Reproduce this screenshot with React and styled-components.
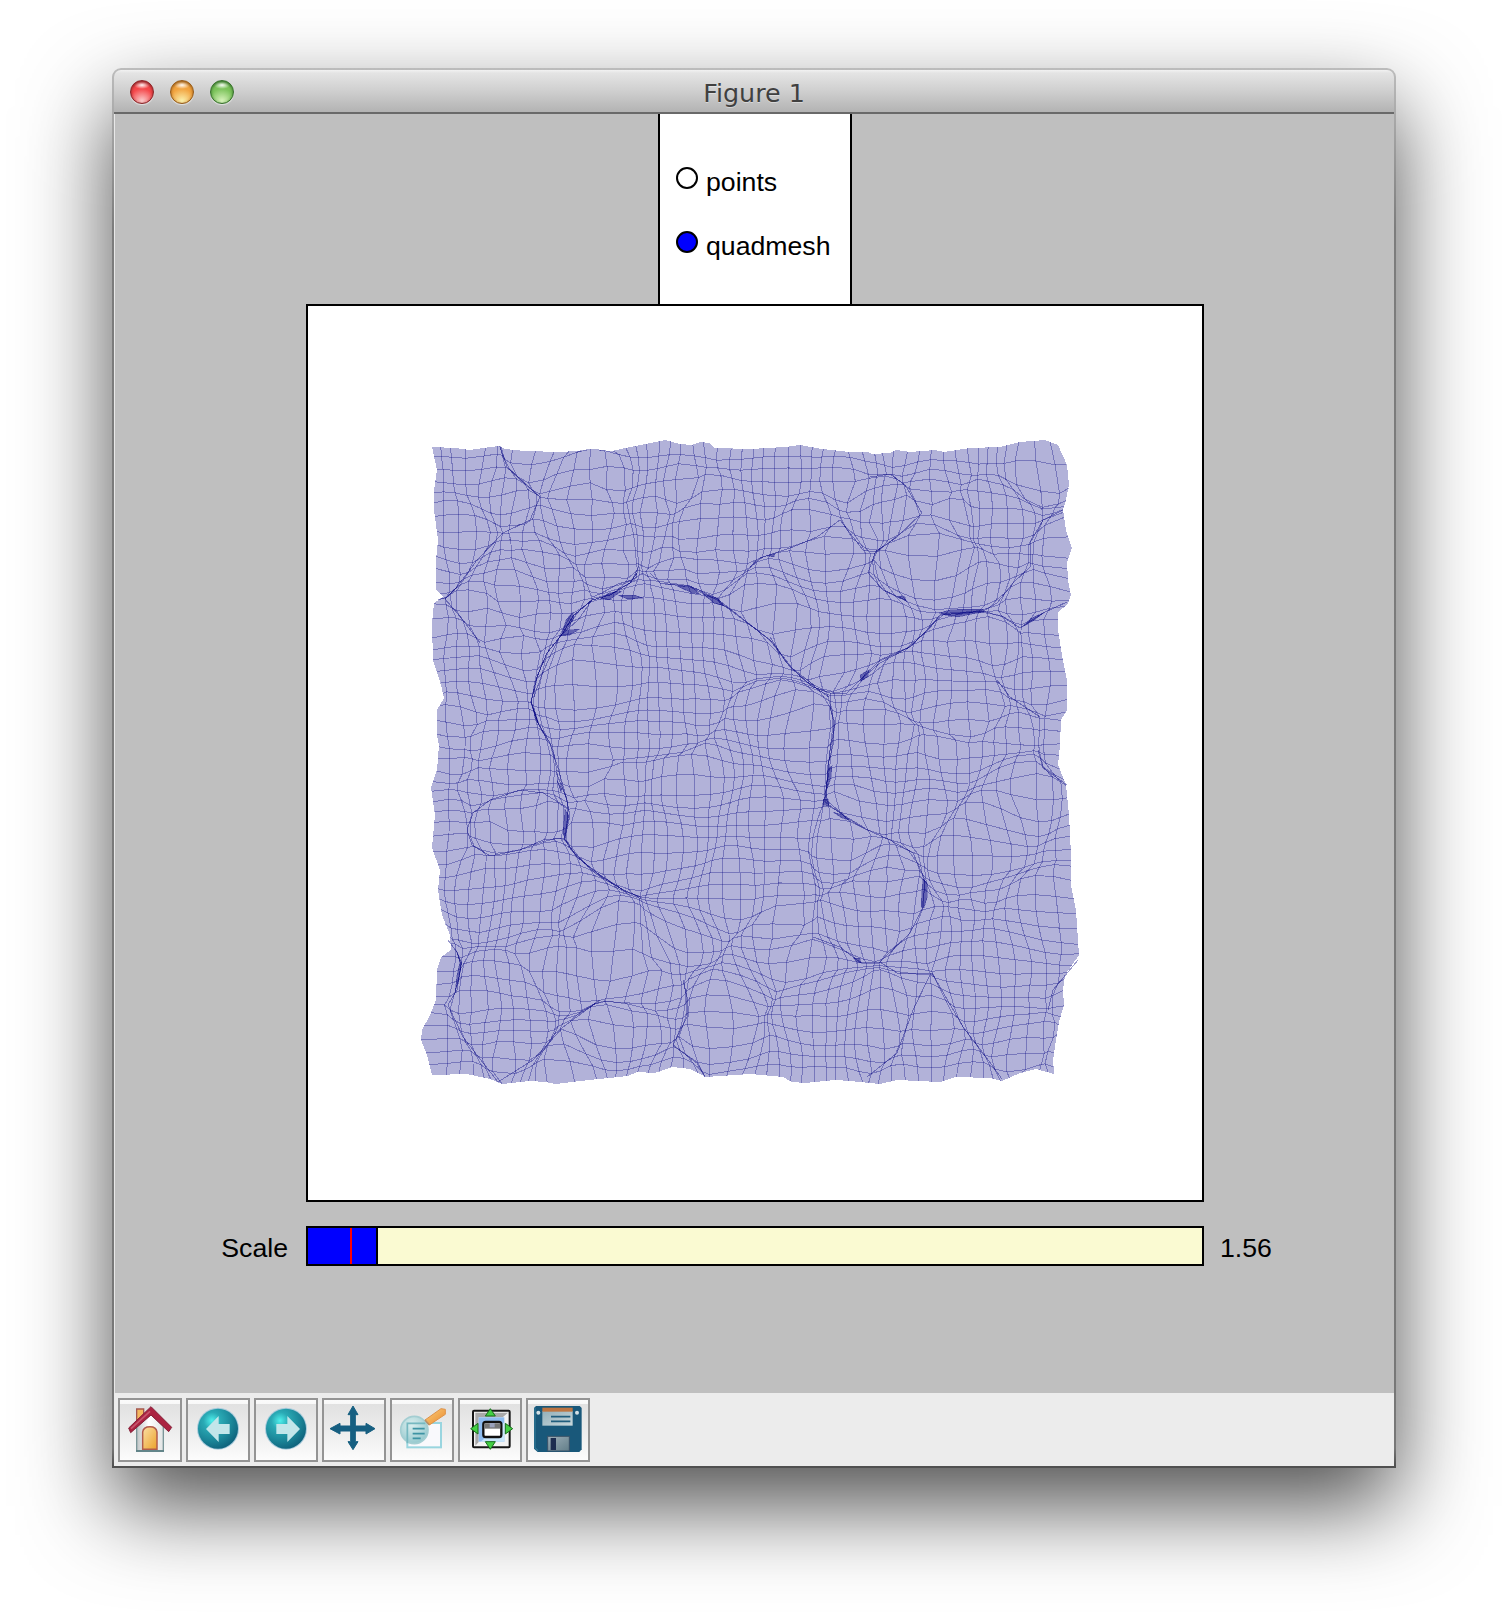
import React from "react";
import styled, { createGlobalStyle } from "styled-components";

const Global = createGlobalStyle`
  * { box-sizing: border-box; }
  body { margin: 0; background: #fff; overflow: hidden; }
`;

const Desktop = styled.main`
  height: 1624px;
  padding: 68px 112px 0;
  background: #fff;
`;

const Window = styled.section`
  width: 1284px;
  height: 1400px;
  padding: 2px 2px 2px;
  border-radius: 9px 9px 0 0;
  background: linear-gradient(#bcbcbc 0, #a8a8a8 50px, #7c7c7c 160px, #777 1380px, #505050 1398px);
  box-shadow: 0 38px 88px rgba(0, 0, 0, 0.69);
`;

const TitleBar = styled.header`
  display: grid;
  grid-template-columns: 1fr auto 1fr;
  align-items: center;
  height: 44px;
  padding: 1px 16px 0;
  border-bottom: 2px solid #696969;
  border-radius: 7px 7px 0 0;
  background: linear-gradient(#f2f2f2 0, #e4e4e4 3px, #cfcfcf 50%, #b3b3b3 100%);
`;

const Lights = styled.div`
  display: flex;
  gap: 16px;
`;

const Light = styled.i`
  width: 24px;
  height: 24px;
  border: 1px solid ${(p) => p.$rim};
  border-radius: 50%;
  background:
    radial-gradient(ellipse 8px 4px at 50% 4px, rgba(255, 255, 255, 0.95), rgba(255, 255, 255, 0) 100%),
    radial-gradient(circle at 50% 92%, ${(p) => p.$glow} 0, ${(p) => p.$color} 55%, ${(p) => p.$color} 70%, ${(p) => p.$rim} 115%);
  box-shadow: inset 0 1px 3px ${(p) => p.$rim}, 0 1px 1px rgba(255, 255, 255, 0.6);
`;

const Title = styled.h1`
  margin: 0;
  padding-top: 2px;
  color: #404040;
  font: 400 25.4px/38px "DejaVu Sans", sans-serif;
  text-shadow: 0 1px 0 rgba(255, 255, 255, 0.4);
`;

const Canvas = styled.div`
  display: grid;
  grid-template-columns: 191px 898px 1fr;
  grid-template-rows: 190px 898px 24px 40px;
  height: 1279px;
  border-left: 1px solid #e8e8e8;
  background: #bfbfbf;
  color: #000;
  font: 26.67px/32px "Liberation Sans", Arial, sans-serif;
`;

const RadioPanel = styled.div`
  grid-column: 2;
  justify-self: center;
  display: flex;
  flex-direction: column;
  gap: 32px;
  width: 194px;
  padding: 49px 0 0 16px;
  border: solid #000;
  border-width: 0 2px;
  background: #fff;
`;

const Option = styled.label`
  display: flex;
  gap: 8px;
  height: 32px;
  line-height: 38px;
`;

const Dot = styled.i`
  flex: none;
  width: 22px;
  height: 22px;
  margin-top: 4px;
  border: 2px solid #000;
  border-radius: 50%;
  background: ${(p) => (p.$on ? "#00f" : "#fff")};
`;

const Axes = styled.div`
  grid-column: 2;
  grid-row: 2;
  border: 2px solid #000;
  background: #fff;
  svg { display: block; }
`;

const SliderLabel = styled.span`
  grid-column: 1;
  grid-row: 4;
  justify-self: end;
  padding: 6px 18px 0 0;
`;

const SliderValue = styled.span`
  grid-column: 3;
  grid-row: 4;
  padding: 6px 0 0 16px;
`;

const Track = styled.div`
  grid-column: 2;
  grid-row: 4;
  border: 2px solid #000;
  background: #fafad2;
`;

const Fill = styled.div`
  width: 70px;
  height: 100%;
  padding-left: 42px;
  border-right: 2px solid #000;
  background: #00f;
`;

const Initial = styled.div`
  width: 2px;
  height: 100%;
  background: #f00;
`;

const Toolbar = styled.nav`
  display: flex;
  gap: 4px;
  height: 73px;
  padding: 5px 4px;
  background: #ececec;
`;

const ToolButton = styled.button`
  width: 64px;
  height: 64px;
  padding: 0;
  border: 2px solid #949494;
  background: linear-gradient(#fbfbfb 0, #f8f8f8 4px, #e1e1e1 4px, #efefef 60%, #fcfcfc 100%);
  svg { display: block; }
`;

/* ---- mesh ---- */

const N = 53;
const BOX = { x0: 432, y0: 447, x1: 1062, y1: 1076 };

const EDGES = {
  top: [[432,447],[455,448],[470,450],[490,447],[500,446],[505,449],[525,451],[560,452],[590,450],[612,451],[635,446],[650,443],[665,440],[680,444],[692,445],[700,442],[709,443],[715,448],[750,449],[785,447],[800,445],[822,449],[850,452],[868,452],[872,454],[890,453],[896,450],[910,452],[935,450],[944,452],[970,448],[1000,447],[1020,442],[1045,440],[1058,445]],
  right: [[1058,445],[1067,465],[1069,485],[1066,500],[1063,510],[1066,530],[1072,548],[1067,562],[1068,580],[1071,595],[1068,604],[1058,612],[1058,630],[1062,655],[1067,680],[1067,710],[1061,720],[1060,745],[1058,765],[1066,785],[1069,815],[1071,855],[1071,885],[1076,910],[1079,955],[1065,975],[1063,990],[1064,1005],[1059,1022],[1056,1040],[1053,1060],[1054,1074]],
  bottom: [[432,1075],[467,1074],[490,1079],[502,1084],[530,1081],[545,1082],[556,1084],[580,1081],[628,1076],[637,1072],[655,1073],[672,1067],[690,1069],[706,1077],[750,1074],[783,1077],[792,1082],[805,1083],[835,1080],[850,1081],[880,1084],[897,1080],[940,1082],[955,1077],[990,1078],[1002,1081],[1020,1073],[1036,1069],[1054,1074]],
  left: [[432,447],[437,470],[434,490],[434,510],[438,540],[436,560],[436,590],[443,597],[434,603],[432,625],[433,660],[441,685],[444,698],[437,710],[437,735],[439,745],[437,770],[431,787],[435,815],[432,848],[440,870],[438,890],[442,915],[450,935],[451,950],[441,957],[437,970],[436,1000],[430,1015],[422,1030],[421,1040],[427,1055],[432,1075]],
};

/* [strength, reach, points] for every filament that gathers the mesh lines */
const FILAMENTS = [
  [0.96, 34, [[637,573],[630,583],[610,595],[592,600],[573,616],[563,633],[547,653],[537,677],[531,702],[538,723],[550,743],[558,768],[567,800],[568,820],[564,838],[577,857],[597,873],[623,890],[640,897]]],
  [0.95, 30, [[650,573],[660,583],[690,587],[717,600],[737,615],[770,640],[790,667],[813,687],[830,693],[847,693],[863,677],[880,660],[910,647],[930,627],[940,615],[963,613],[983,611],[997,603],[1013,583],[1030,567],[1030,543],[1043,520],[1063,510]]],
  [0.9, 18, [[983,611],[1003,617],[1020,628],[1043,613],[1067,602]]],
  [0.8, 16, [[1021,630],[1023,663],[1025,693],[1040,717]]],
  [0.95, 27, [[830,693],[830,707],[835,723],[830,750],[825,802],[847,818],[863,828],[890,840],[913,853],[925,880],[923,907],[910,933],[880,962]]],
  [0.92, 20, [[880,962],[860,962],[840,947],[813,937]]],
  [0.9, 21, [[880,962],[897,973],[932,973],[963,1027],[983,1053],[1002,1079]]],
  [0.94, 21, [[500,447],[507,467],[540,497],[530,520],[503,533],[477,560],[457,587],[445,599],[463,620],[480,643]]],
  [0.88, 18, [[543,638],[507,620],[493,600],[493,583],[500,570],[533,540],[553,545],[573,560],[592,597]]],
  [0.88, 17, [[590,480],[603,497],[633,530],[632,557],[637,573]]],
  [0.88, 18, [[627,500],[640,520],[677,535],[683,553],[693,567]]],
  [0.85, 15, [[702,475],[699,493],[677,510]]],
  [0.93, 21, [[750,567],[760,558],[793,547],[817,537],[840,520],[863,550],[875,552],[897,537],[922,513],[905,485],[890,474],[870,477]]],
  [0.8, 17, [[922,513],[950,497],[977,477]]],
  [0.88, 18, [[935,528],[950,535],[1000,553]]],
  [0.9, 18, [[875,553],[868,573],[883,590],[905,600]]],
  [0.92, 20, [[997,680],[1010,697],[1040,717]]],
  [0.88, 20, [[875,690],[897,713],[923,727],[950,737],[968,741],[983,735],[1010,713]]],
  [0.88, 20, [[617,760],[687,753],[710,737],[723,717],[733,693],[750,683],[773,682],[813,687]]],
  [0.9, 20, [[568,808],[543,793],[520,790],[490,800],[473,813],[467,830],[472,845],[490,856],[520,850],[543,840],[564,838]]],
  [0.94, 22, [[448,940],[457,952],[461,965],[457,990],[448,1005],[463,1037],[498,1082],[533,1060],[547,1045],[563,1027],[600,1000]]],
  [0.85, 18, [[480,945],[510,950],[530,975],[543,997],[560,1022]]],
  [0.9, 18, [[683,980],[687,997],[687,1017],[673,1045],[697,1063],[705,1077]]],
  [0.88, 18, [[560,935],[570,940],[593,953],[633,952],[663,970],[677,960]]],
  [0.88, 20, [[763,1018],[783,990],[820,975],[867,973]]],
  [0.9, 19, [[930,975],[913,1010],[897,1053],[867,1077]]],
  [0.92, 18, [[1078,960],[1053,990],[1048,1010]]],
  [0.85, 15, [[1060,1030],[1043,1067],[1020,1075]]],
  [0.92, 15, [[1038,750],[1043,768],[1067,785]]],
  [0.88, 20, [[715,965],[733,937],[750,925],[770,907],[817,897],[850,880]]],
  [0.85, 18, [[817,897],[812,870],[808,847],[825,805]]],
  [0.8, 18, [[1000,790],[975,790],[960,805],[937,835],[925,878]]],
  [0.8, 18, [[955,905],[980,885],[1012,875],[1055,862]]],
  [0.8, 18, [[480,722],[468,735],[467,750],[475,765],[455,785]]],
  [0.85, 17, [[568,806],[590,800],[603,785],[617,762]]],
];

const interp = (pts, axis, v) => {
  const o = 1 - axis;
  for (let k = 0; k < pts.length - 1; k++) {
    const a = pts[k], b = pts[k + 1];
    if (v <= b[axis] || k === pts.length - 2) {
      const t = Math.max(0, Math.min(1, (v - a[axis]) / (b[axis] - a[axis] || 1)));
      return a[o] + (b[o] - a[o]) * t;
    }
  }
  return pts[0][o];
};

const nearest = (pts, x, y) => {
  let best = [0, 0, 1e9];
  for (let k = 0; k < pts.length - 1; k++) {
    const [ax, ay] = pts[k];
    const ex = pts[k + 1][0] - ax, ey = pts[k + 1][1] - ay;
    const t = Math.max(0, Math.min(1, ((x - ax) * ex + (y - ay) * ey) / (ex * ex + ey * ey)));
    const vx = ax + ex * t - x, vy = ay + ey * t - y;
    const d = vx * vx + vy * vy;
    if (d < best[2]) best = [vx, vy, d];
  }
  return best;
};

const random = (seed) => () => {
  seed = (seed * 1664525 + 1013904223) >>> 0;
  return seed / 4294967296;
};

function buildMesh() {
  const rnd = random(29);
  const blobs = Array.from({ length: 380 }, () => ({
    x: 420 + rnd() * 660,
    y: 435 + rnd() * 655,
    s: 9 + rnd() * 17,
    a: rnd() * 0.95 - 0.32,
  }));
  const grid = [];
  for (let j = 0; j <= N; j++) {
    const row = [];
    for (let i = 0; i <= N; i++) {
      const bx = BOX.x0 + ((BOX.x1 - BOX.x0) * i) / N;
      const by = BOX.y0 + ((BOX.y1 - BOX.y0) * j) / N;
      let x = bx, y = by;
      for (const b of blobs) {
        const dx = bx - b.x, dy = by - b.y;
        const g = b.a * Math.exp(-(dx * dx + dy * dy) / (2 * b.s * b.s));
        x += dx * g;
        y += dy * g;
      }
      let sx = 0, sy = 0, total = 0;
      for (const [strength, reach, pts] of FILAMENTS) {
        const [vx, vy, d] = nearest(pts, x, y);
        const g = Math.exp(-d / (reach * reach));
        sx += vx * g * strength;
        sy += vy * g * strength;
        total += g;
      }
      const k = Math.max(1, total);
      row.push([x + sx / k, y + sy / k]);
    }
    grid.push(row);
  }
  const step = (BOX.x1 - BOX.x0) / N;
  const fade = (n) => Math.exp(-(n * step) / 13);
  const fixX = grid.map((row) => [
    interp(EDGES.left, 1, row[0][1]) - row[0][0],
    interp(EDGES.right, 1, row[N][1]) - row[N][0],
  ]);
  for (let j = 0; j <= N; j++)
    for (let i = 0; i <= N; i++)
      grid[j][i][0] += fixX[j][0] * fade(i) + fixX[j][1] * fade(N - i);
  const fixY = grid[0].map((p, i) => [
    interp(EDGES.top, 0, p[0]) - p[1],
    interp(EDGES.bottom, 0, grid[N][i][0]) - grid[N][i][1],
  ]);
  for (let j = 0; j <= N; j++)
    for (let i = 0; i <= N; i++)
      grid[j][i][1] += fixY[i][0] * fade(j) + fixY[i][1] * fade(N - j);
  return grid;
}

const toPath = (pts) => "M" + pts.map((p) => p[0].toFixed(1) + " " + p[1].toFixed(1)).join("L");

const grid = buildMesh();
const LINES = [];
for (let k = 1; k < N; k++) {
  LINES.push(toPath(grid[k]));
  LINES.push(toPath(grid.map((row) => row[k])));
}
const OUTLINE = toPath([
  ...EDGES.top,
  ...EDGES.right,
  ...[...EDGES.bottom].reverse(),
  ...[...EDGES.left].reverse(),
]) + "Z";

/* the creases where many lines run together */
const CREASES = [
  ...FILAMENTS.filter(([strength]) => strength >= 0.9).map(([, , pts]) => toPath(pts)),
  "M637 573L630 583L610 595L592 600L573 616L563 633L547 653L537 677L531 702L538 723L546 738",
  "M592 600L578 620L560 636L552 652L541 677L534 697",
  "M592 597L600 594L618 584L632 580L639 566",
  "M665 584L690 586L716 598L738 615L772 642L792 668L815 686",
  "M830 707L834 723L833 745L828 765L826 800L845 816L865 828",
  "M564 838L571 850L596 874L622 889",
  "M770 637L786 662L803 679L829 697",
  "M860 680L880 663L908 648L928 630L938 618",
  "M457 587L447 597L438 600",
  "M556 772L566 797L570 815L565 838",
];

/* places where the sheet folds over itself */
const FOLDS = [
  "M939 613L950 610L963 609L983 609L984 612L972 614L958 617L945 615Z",
  "M923 879L927 883L927 898L924 908L921 907L922 890Z",
  "M860 675L869 670L868 677L861 681Z",
  "M1022 627L1030 619L1045 612L1033 621Z",
  "M600 599L609 593L622 591L609 600Z",
  "M561 636L566 620L573 612L574 618L567 630L580 629L570 635Z",
  "M618 595L634 595L643 598L627 599Z",
  "M677 586L692 587L700 594L692 593Z",
  "M703 594L718 598L724 606L714 603Z",
  "M532 704L535 712L539 724L535 718Z",
  "M565 809L569 816L567 826L565 839L563 833Z",
  "M557 780L562 789L561 792Z",
  "M456 950L462 963L459 978L455 993L457 975L460 962Z",
  "M823 799L828 799L829 806L823 805Z",
  "M829 768L832 766L831 778L827 789Z",
  "M833 812L843 815L849 820L842 818Z",
  "M853 958L860 958L861 963L857 962Z",
  "M898 596L905 597L906 601Z",
  "M767 556L775 554L774 557Z",
];

function Mesh() {
  return (
    <svg width="894" height="894" viewBox="308 306 894 894" shapeRendering="crispEdges">
      <path d={OUTLINE} fill="#b2b2d9" />
      <g fill="none" stroke="#000080" strokeOpacity="0.33">
        {LINES.map((d, i) => <path key={i} d={d} />)}
      </g>
      <g fill="none" stroke="#000080" strokeOpacity="0.4">
        {CREASES.map((d, i) => <path key={i} d={d} />)}
      </g>
      <g fill="#000080" fillOpacity="0.45" stroke="#000080" strokeOpacity="0.25">
        {FOLDS.map((d, i) => <path key={i} d={d} />)}
      </g>
    </svg>
  );
}

/* ---- toolbar icons ---- */

const Icon = ({ children }) => (
  <svg width="60" height="60" viewBox="0 0 180 180">{children}</svg>
);

const HomeIcon = () => (
  <Icon>
    <defs>
      <linearGradient id="door" x1="0" y1="0" x2="1" y2="1"><stop stopColor="#fbe0a6" /><stop offset="1" stopColor="#eba22a" /></linearGradient>
      <linearGradient id="wall"><stop stopColor="#bfc4c5" /><stop offset=".45" stopColor="#fff" /><stop offset="1" stopColor="#e2e4e4" /></linearGradient>
    </defs>
    <path d="M50 27H71V52L50 72Z" fill="#f4b860" stroke="#a5574d" strokeWidth="4" />
    <path d="M50 80L92 42L130 78V153H50Z" fill="url(#wall)" stroke="#7b9699" strokeWidth="4" />
    <path d="M48 153H132" stroke="#587e82" strokeWidth="5" />
    <path d="M68 148V96Q70 80 90 80Q109 80 111 96V148Z" fill="url(#door)" stroke="#b25c4b" strokeWidth="4.5" />
    <path d="M32 98L93 45L146 95L155 82L93 20L26 84Z" fill="#ab2341" stroke="#852039" strokeWidth="3" />
    <path d="M33 86L90 34" stroke="#c7566e" strokeWidth="5" />
  </Icon>
);

const BallIcon = ({ id, d }) => (
  <Icon>
    <defs>
      <radialGradient id={id} cx=".35" cy=".3" r=".75"><stop stopColor="#4ff0ec" /><stop offset=".28" stopColor="#2aaab5" /><stop offset=".65" stopColor="#1b8799" /><stop offset="1" stopColor="#0e617b" /></radialGradient>
    </defs>
    <circle cx="90" cy="86" r="63" fill="#a9cbdc" />
    <circle cx="90" cy="86" r="60" fill={`url(#${id})`} />
    <path d={d} fill="#c2e6ea" />
  </Icon>
);

const PanIcon = () => (
  <Icon>
    <path d="M87 18L102 44H94V78H126V70L153 86L126 102V93H94V125H102L87 149L72 125H80V93H48V102L18 86L48 70V78H80V44H72Z" fill="#165f81" stroke="#165f81" strokeWidth="3" strokeLinejoin="round" />
  </Icon>
);

const ZoomIcon = () => (
  <Icon>
    <defs>
      <radialGradient id="lens" cx=".4" cy=".3" r=".8"><stop stopColor="#d7eded" /><stop offset=".5" stopColor="#afd7da" /><stop offset="1" stopColor="#82bfc5" /></radialGradient>
      <linearGradient id="handle" x1="0" y1="0" x2="1" y2="1"><stop stopColor="#fbcf80" /><stop offset="1" stopColor="#e98829" /></linearGradient>
    </defs>
    <rect x="46" y="69" width="101" height="73" fill="#f9f9fc" stroke="#99d5df" strokeWidth="6" />
    <circle cx="67" cy="90" r="41" fill="url(#lens)" fillOpacity=".92" stroke="#a4ced2" strokeWidth="5" />
    <path d="M46 130V70H100" fill="none" stroke="#76b8c0" strokeWidth="5" />
    <path d="M62 86H98M62 101H98M62 115H86" stroke="#3d93a4" strokeWidth="5" />
    <path d="M99 60L147 26L160 28V43L112 75Z" fill="url(#handle)" stroke="#df9248" strokeWidth="3" />
    <path d="M99 60L112 75" stroke="#b88f68" strokeWidth="5" />
  </Icon>
);

const SubplotsIcon = () => (
  <Icon>
    <rect x="39" y="32" width="110" height="110" rx="3" fill="#f3f3f3" stroke="#171717" strokeWidth="6" />
    <path d="M46 38H144L128 52H56V126L46 137Z" fill="#a9a9a9" />
    <rect x="56" y="52" width="77" height="73" fill="#8ebcf0" />
    <path d="M62 125L133 67V125Z" fill="#c8e6fb" />
    <rect x="70" y="66" width="54" height="45" rx="7" fill="#fff" stroke="#101010" strokeWidth="7" />
    <path d="M73 70H121V86H73Z" fill="#777" />
    <path d="M89 69H104V82H89Z" fill="#9aa2bc" />
    <g fill="#43cf43" stroke="#176d1c" strokeWidth="3">
      <path d="M91 26L106 48H76ZM91 148L76 125H106ZM32 86L54 70V102ZM158 86L136 70V102Z" />
    </g>
  </Icon>
);

const SaveIcon = () => (
  <Icon>
    <defs>
      <linearGradient id="label" x2="1" y2="1"><stop stopColor="#93b0ba" /><stop offset="1" stopColor="#c9d7db" /></linearGradient>
      <linearGradient id="shutter" x2="1" y2="1"><stop stopColor="#9daeb8" /><stop offset="1" stopColor="#627e89" /></linearGradient>
    </defs>
    <path d="M24 18H155L161 24V148L154 156H29L18 146V24Z" fill="#19587a" />
    <path d="M21 23V143L30 152" fill="none" stroke="#2e7594" strokeWidth="4" />
    <path d="M43 33H134V77H43Z" fill="url(#label)" />
    <path d="M43 23H134V35H43Z" fill="#bd7542" />
    <path d="M69 50H127M69 64H127" stroke="#205d7d" strokeWidth="5" />
    <circle cx="31" cy="38" r="6" fill="#d4e0e5" /><circle cx="147" cy="38" r="6" fill="#d4e0e5" />
    <rect x="59" y="109" width="65" height="44" fill="url(#shutter)" stroke="#3b5268" strokeWidth="3" />
    <rect x="68" y="114" width="16" height="36" fill="#1d2d50" />
  </Icon>
);

const TOOLS = [
  ["Home", <HomeIcon />],
  ["Back", <BallIcon id="back" d="M54 87L92 48V72H125V102H92V126Z" />],
  ["Forward", <BallIcon id="forward" d="M132 87L94 48V72H61V102H94V126Z" />],
  ["Pan", <PanIcon />],
  ["Zoom", <ZoomIcon />],
  ["Subplots", <SubplotsIcon />],
  ["Save", <SaveIcon />],
];

export default function App() {
  return (
    <Desktop>
      <Global />
      <Window>
        <TitleBar>
          <Lights>
            <Light $color="#f5484b" $glow="#fbd0d0" $rim="#8a2326" />
            <Light $color="#f2a440" $glow="#fbf3b0" $rim="#965a18" />
            <Light $color="#7cc35b" $glow="#dcf5c0" $rim="#35702a" />
          </Lights>
          <Title>Figure 1</Title>
        </TitleBar>
        <Canvas>
          <RadioPanel>
            <Option><Dot />points</Option>
            <Option><Dot $on />quadmesh</Option>
          </RadioPanel>
          <Axes><Mesh /></Axes>
          <SliderLabel>Scale</SliderLabel>
          <Track><Fill><Initial /></Fill></Track>
          <SliderValue>1.56</SliderValue>
        </Canvas>
        <Toolbar>
          {TOOLS.map(([name, icon]) => (
            <ToolButton key={name} aria-label={name}>{icon}</ToolButton>
          ))}
        </Toolbar>
      </Window>
    </Desktop>
  );
}
